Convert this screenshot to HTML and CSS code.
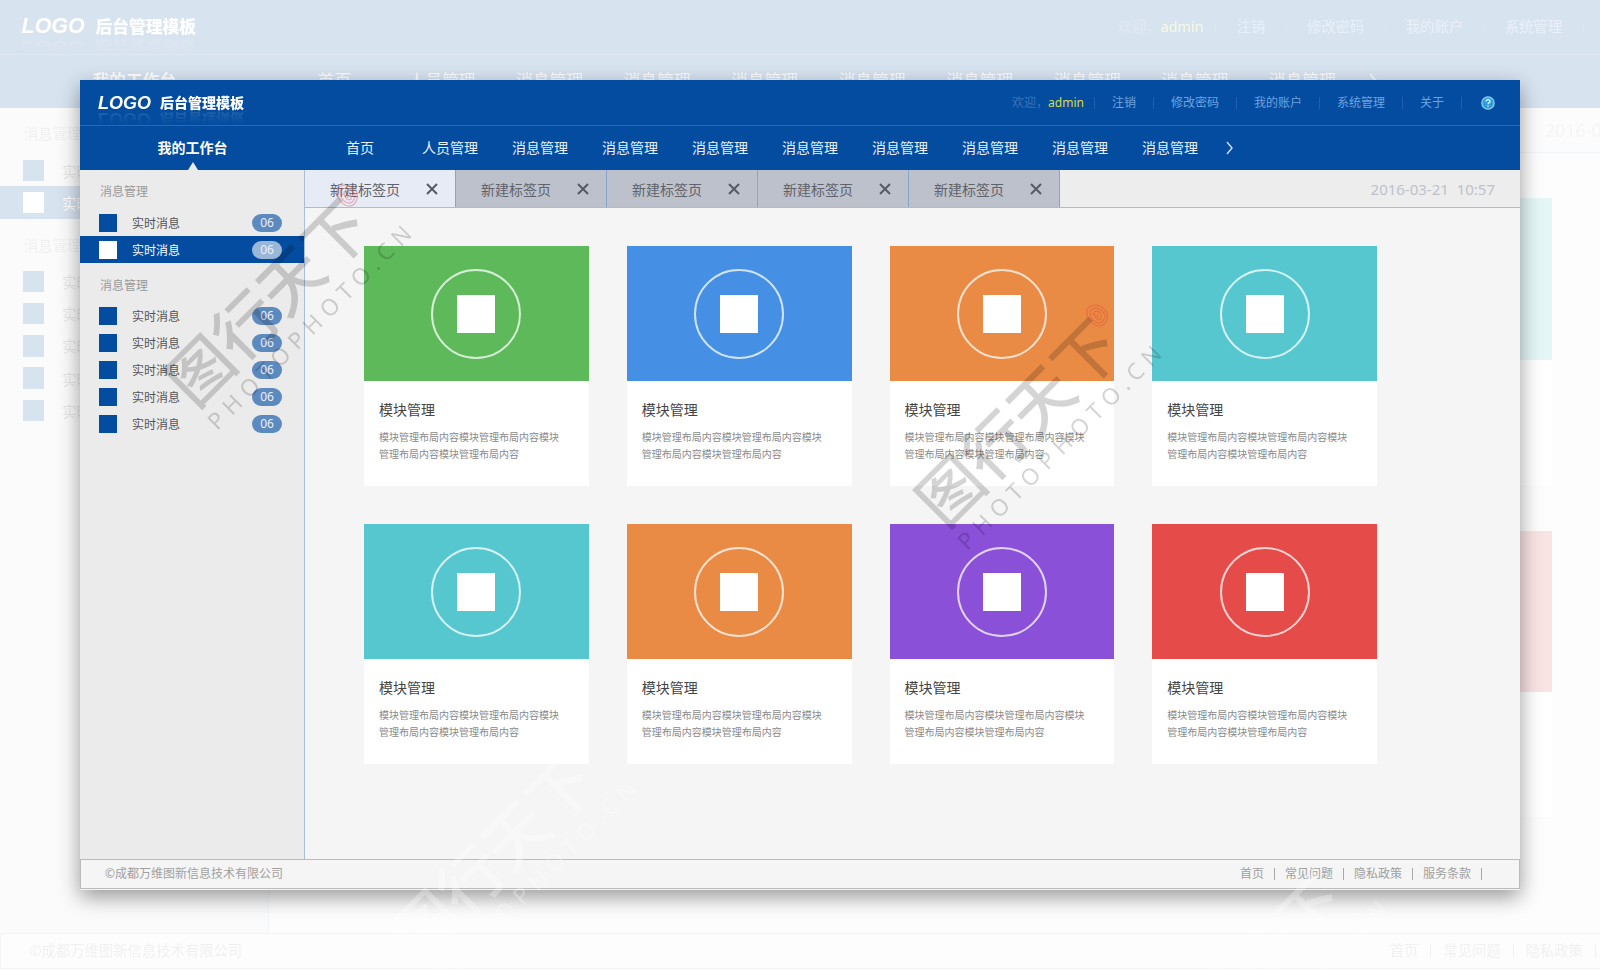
FILE: index.html
```html
<!DOCTYPE html>
<html lang="zh-CN">
<head>
<meta charset="utf-8">
<title>后台管理模板</title>
<link rel="stylesheet" href="styles.css">
</head>
<body>
<svg class="defs" aria-hidden="true">
  <symbol id="close" viewBox="0 0 12 12"><path d="M1 1L11 11M11 1L1 11" fill="none" stroke="#555b66" stroke-width="2"/></symbol>
  <symbol id="next" viewBox="0 0 9 14"><path d="M2 1L7 7L2 13" fill="none" stroke="#cfe0f5" stroke-width="1.4"/></symbol>
  <symbol id="help" viewBox="0 0 14 14"><circle cx="7" cy="7" r="6.2" fill="#2f9bd8" stroke="#8fd4f5" stroke-width="1.2"/><path d="M5 5.6Q5 3.6 7 3.6T9 5.4Q9 6.4 7.9 6.9Q7 7.4 7 8.3M7 9.6V10.8" fill="none" stroke="#e6f7ff" stroke-width="1.3"/></symbol>
  <symbol id="seal" viewBox="0 0 24 24"><g fill="none" stroke="#e23b3b" stroke-width="1.2"><path d="M4 3Q12 -1 18 4T22 15Q20 22 14 22T3 13Q0 7 4 3Z"/><path d="M6 6Q12 2 17 7T19 15Q17 20 13 19T6 13Q4 8 6 6Z"/><path d="M9 8Q13 6 15 9T16 15Q13 17 11 14T9 8Z"/><path d="M12 10L13 14M7 10L10 11"/></g></symbol>
</svg>

<div class="page">
  <div class="app backdrop" aria-hidden="true" inert>
    <header class="top">
      <div class="brand"><span class="brand-mark">LOGO</span><span class="brand-name">后台管理模板</span></div>
      <nav class="account"><span class="hello">欢迎，</span><span class="user">admin</span><a>注销</a><a>修改密码</a><a>我的账户</a><a>系统管理</a><a>关于</a><svg class="help"><use href="#help"/></svg></nav>
    </header>
    <nav class="menu"><a class="home">我的工作台</a><a class="first">首页</a><a>人员管理</a><a>消息管理</a><a>消息管理</a><a>消息管理</a><a>消息管理</a><a>消息管理</a><a>消息管理</a><a>消息管理</a><a>消息管理</a><svg class="next"><use href="#next"/></svg></nav>
    <div class="body">
      <aside class="side">
        <h2>消息管理</h2>
        <ul><li><a><i></i>实时消息</a></li><li class="on"><a><i></i>实时消息</a></li></ul>
        <h2>消息管理</h2>
        <ul><li><a><i></i>实时消息</a></li><li><a><i></i>实时消息</a></li><li><a><i></i>实时消息</a></li><li><a><i></i>实时消息</a></li><li><a><i></i>实时消息</a></li></ul>
      </aside>
      <main class="main">
        <div class="tabs"><time>2016-03-21&nbsp; 10:57</time></div>
        <div class="cards">
          <article class="card teal last"><div class="cover"></div><div class="info"></div></article>
          <article class="card red last"><div class="cover"></div><div class="info"></div></article>
        </div>
      </main>
    </div>
    <footer class="foot"><span>©成都万维图新信息技术有限公司</span><nav><a>首页</a><a>常见问题</a><a>隐私政策</a><a>服务条款</a></nav></footer>
  </div>

  <div class="app window">
    <header class="top">
      <div class="brand"><span class="brand-mark">LOGO</span><span class="brand-name">后台管理模板</span></div>
      <nav class="account">
        <span class="hello">欢迎，</span><span class="user">admin</span>
        <a href="#">注销</a><a href="#">修改密码</a><a href="#">我的账户</a><a href="#">系统管理</a><a href="#">关于</a>
        <button type="button" aria-label="帮助"><svg class="help"><use href="#help"/></svg></button>
      </nav>
    </header>
    <nav class="menu">
      <a class="home" href="#">我的工作台</a>
      <a class="first" href="#">首页</a><a href="#">人员管理</a><a href="#">消息管理</a><a href="#">消息管理</a><a href="#">消息管理</a><a href="#">消息管理</a><a href="#">消息管理</a><a href="#">消息管理</a><a href="#">消息管理</a><a href="#">消息管理</a>
      <button type="button" aria-label="更多"><svg class="next"><use href="#next"/></svg></button>
    </nav>
    <div class="body">
      <aside class="side">
        <h2>消息管理</h2>
        <ul>
          <li><a href="#"><i></i>实时消息<b>06</b></a></li>
          <li class="on"><a href="#"><i></i>实时消息<b>06</b></a></li>
        </ul>
        <h2>消息管理</h2>
        <ul>
          <li><a href="#"><i></i>实时消息<b>06</b></a></li>
          <li><a href="#"><i></i>实时消息<b>06</b></a></li>
          <li><a href="#"><i></i>实时消息<b>06</b></a></li>
          <li><a href="#"><i></i>实时消息<b>06</b></a></li>
          <li><a href="#"><i></i>实时消息<b>06</b></a></li>
        </ul>
      </aside>
      <main class="main">
        <div class="tabs">
          <div class="tab on"><a href="#">新建标签页</a><button type="button" aria-label="关闭"><svg class="close"><use href="#close"/></svg></button></div>
          <div class="tab"><a href="#">新建标签页</a><button type="button" aria-label="关闭"><svg class="close"><use href="#close"/></svg></button></div>
          <div class="tab"><a href="#">新建标签页</a><button type="button" aria-label="关闭"><svg class="close"><use href="#close"/></svg></button></div>
          <div class="tab"><a href="#">新建标签页</a><button type="button" aria-label="关闭"><svg class="close"><use href="#close"/></svg></button></div>
          <div class="tab"><a href="#">新建标签页</a><button type="button" aria-label="关闭"><svg class="close"><use href="#close"/></svg></button></div>
          <time>2016-03-21&nbsp; 10:57</time>
        </div>
        <div class="cards">
          <article class="card green"><div class="cover"><span class="ring"></span></div><div class="info"><h3>模块管理</h3><p>模块管理布局内容模块管理布局内容模块管理布局内容模块管理布局内容</p></div></article>
          <article class="card blue"><div class="cover"><span class="ring"></span></div><div class="info"><h3>模块管理</h3><p>模块管理布局内容模块管理布局内容模块管理布局内容模块管理布局内容</p></div></article>
          <article class="card orange"><div class="cover"><span class="ring"></span></div><div class="info"><h3>模块管理</h3><p>模块管理布局内容模块管理布局内容模块管理布局内容模块管理布局内容</p></div></article>
          <article class="card teal"><div class="cover"><span class="ring"></span></div><div class="info"><h3>模块管理</h3><p>模块管理布局内容模块管理布局内容模块管理布局内容模块管理布局内容</p></div></article>
          <article class="card teal"><div class="cover"><span class="ring"></span></div><div class="info"><h3>模块管理</h3><p>模块管理布局内容模块管理布局内容模块管理布局内容模块管理布局内容</p></div></article>
          <article class="card orange"><div class="cover"><span class="ring"></span></div><div class="info"><h3>模块管理</h3><p>模块管理布局内容模块管理布局内容模块管理布局内容模块管理布局内容</p></div></article>
          <article class="card purple"><div class="cover"><span class="ring"></span></div><div class="info"><h3>模块管理</h3><p>模块管理布局内容模块管理布局内容模块管理布局内容模块管理布局内容</p></div></article>
          <article class="card red"><div class="cover"><span class="ring"></span></div><div class="info"><h3>模块管理</h3><p>模块管理布局内容模块管理布局内容模块管理布局内容模块管理布局内容</p></div></article>
        </div>
      </main>
    </div>
    <footer class="foot">
      <span>©成都万维图新信息技术有限公司</span>
      <nav><a href="#">首页</a><a href="#">常见问题</a><a href="#">隐私政策</a><a href="#">服务条款</a></nav>
    </footer>
  </div>

  <svg class="marks" aria-hidden="true">
    <defs>
      <g id="mark">
        <g transform="translate(206 376) rotate(-45)">
          <text class="mark-brush" x="-32" y="16">图行天下</text>
        </g>
        <g transform="translate(213 420) rotate(-45)">
          <text class="mark-latin" x="-5" y="11">PHOTOPHOTO.CN</text>
        </g>
      </g>
    </defs>
    <g class="mark-dark">
      <use href="#mark"/>
      <use href="#mark" x="750" y="120"/>
    </g>
    <g class="mark-seal">
      <use href="#seal" x="335" y="184" width="24" height="24"/>
      <use href="#seal" x="1085" y="304" width="24" height="24"/>
    </g>
    <g class="mark-light">
      <use href="#mark" x="225" y="555"/>
      <use href="#mark" x="975" y="675"/>
    </g>
  </svg>
</div>
</body>
</html>
```
FILE: styles.css
```css
* { box-sizing: border-box; }
body {
  margin: 0;
  background: #fff;
  font-family: "Noto Sans", "Noto Sans CJK SC", sans-serif;
  font-size: 12px;
  color: #555;
}
h2, h3, p, ul { margin: 0; padding: 0; font-weight: 400; }
ul { list-style: none; }
a { color: inherit; text-decoration: none; }
button { border: 0; padding: 0; background: none; display: flex; cursor: pointer; }
svg { display: block; }
.defs { position: absolute; width: 0; height: 0; }

.page { position: relative; min-height: 100vh; padding: 80px; display: grid; overflow: hidden; }
.app { display: flex; flex-direction: column; background: #f5f5f5; }
.backdrop { position: absolute; top: 0; left: 0; width: 107.7%; height: 100%; zoom: 1.195; opacity: .15; }
.window { position: relative; box-shadow: 0 7px 20px rgba(0, 0, 0, .4); }

.top {
  height: 46px;
  padding: 0 25px 0 18px;
  display: flex;
  align-items: center;
  justify-content: space-between;
  background: #034c9f;
  border-bottom: 1px solid #2a68b1;
}
.brand {
  display: flex;
  align-items: center;
  gap: 9px;
  color: #fff;
  line-height: 18px;
  -webkit-box-reflect: below -2px linear-gradient(transparent 20%, rgba(255, 255, 255, .14));
}
.brand-mark { font: italic 700 18px/18px "Liberation Sans", sans-serif; }
.brand-name { font-size: 14px; font-weight: 900; }

.account { display: flex; align-items: center; line-height: 12px; color: #6fa3e0; }
.account a { padding: 0 17px; border-right: 1px solid #1f5fae; }
.hello { color: #3a74bd; }
.user { color: #d5de45; padding-right: 10px; border-right: 1px solid #1f5fae; }
.help { width: 14px; height: 14px; margin-left: 19px; }

.menu { height: 44px; display: flex; align-items: center; background: #034c9f; color: #e8f1fc; font-size: 14px; }
.menu a { width: 90px; text-align: center; line-height: 44px; }
.menu .home { position: relative; width: 225px; font-weight: 700; color: #fff; }
.menu .home::after {
  content: "";
  position: absolute;
  left: 50%;
  bottom: 0;
  margin-left: -5px;
  border: 5px solid transparent;
  border-top-width: 0;
  border-bottom: 8px solid #ebebeb;
}
.menu .first { margin-left: 10px; }
.next { width: 9px; height: 14px; margin-left: 10px; }

.body { flex: 1; display: flex; }
.side { width: 225px; background: #ebebeb; border-right: 1px solid #a9bfd8; }
.side h2 { padding: 13px 20px 7px; font-size: 12px; line-height: 18px; color: #999; }
.side ul { margin-bottom: 1px; }
.side a { height: 27px; padding: 0 22px 0 19px; display: flex; align-items: center; }
.side i { width: 18px; height: 18px; margin-right: 15px; background: #034c9f; }
.side b {
  width: 30px;
  margin-left: auto;
  border-radius: 9px;
  background: #5c8abf;
  color: #e9f1fa;
  font-weight: 400;
  line-height: 18px;
  text-align: center;
}
.side .on { background: #034c9f; color: #fff; }
.side .on i { background: #fff; }
.side .on b { background: #9bb7d8; }
.side h2:first-child { padding-bottom: 8px; }

.main { flex: 1; }
.tabs { height: 38px; display: flex; background: #ededed; border-bottom: 1px solid #a9bdd3; }
.tab {
  width: 151px;
  padding: 0 17px 0 25px;
  display: flex;
  align-items: center;
  justify-content: space-between;
  background: #bdc1cb;
  border-right: 1px solid #86a5cb;
  font-size: 14px;
  color: #60636a;
}
.tab.on { background: #e6ebf6; }
.close { width: 12px; height: 12px; }
.tabs time { margin: auto 25px auto auto; font-size: 15px; color: #bcc1cb; }

.cards {
  padding: 38px 143px 38px 59px;
  display: grid;
  grid-template-columns: repeat(4, 1fr);
  gap: 38px;
}
.card { background: #fff; }
.card.last { grid-column: 4; }
.cover { height: 135px; display: flex; align-items: center; justify-content: center; }
.ring {
  width: 90px;
  height: 90px;
  display: flex;
  align-items: center;
  justify-content: center;
  border: 2px solid rgba(255, 255, 255, .75);
  border-radius: 50%;
}
.ring::after { content: ""; width: 38px; height: 38px; background: #fff; }
.green .cover { background: #5eb95b; }
.blue .cover { background: #458fe4; }
.orange .cover { background: #ea8b45; }
.teal .cover { background: #56c7ce; }
.purple .cover { background: #8a50d8; }
.red .cover { background: #e44b49; }
.info { min-height: 105px; padding: 19px 24px 19px 15px; }
.info h3 { font-size: 14px; line-height: 20px; color: #444; }
.info p { margin-top: 9px; font-size: 10px; line-height: 17px; color: #8a8a8a; }

.foot {
  height: 30px;
  margin-bottom: 1px;
  padding: 0 37px 0 24px;
  display: flex;
  align-items: center;
  justify-content: space-between;
  border: 1px solid #b9bbbd;
  color: #a0a0a0;
  line-height: 12px;
}
.foot nav { display: flex; }
.foot a { padding: 0 10px; border-right: 1px solid #a8a8a8; }
.foot a:first-child { padding-left: 0; }

.marks { position: absolute; top: 0; left: 0; width: 100%; height: 100%; pointer-events: none; }
.mark-brush { font-family: "Noto Sans CJK SC", sans-serif; font-size: 64px; font-weight: 500; }
.mark-latin { font-size: 23px; letter-spacing: 7px; }
.mark-dark { fill: #000; opacity: .17; }
.mark-light { fill: #fff; opacity: .3; }
.mark-seal { opacity: .35; }
```
